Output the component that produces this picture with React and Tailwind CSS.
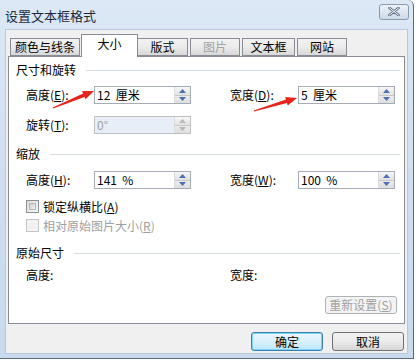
import React from 'react';

const font = "font-['SimSun','Noto_Sans_CJK_SC',sans-serif]";

function Spin({ disabled }) {
  const arrow = disabled ? '#b8b8b8' : '#4d6fb5';
  return (
    <div className="flex flex-col w-[16px] h-full border-l border-[#dcdcdc]">
      <div className="flex-1 flex items-center justify-center bg-gradient-to-b from-[#f6f6f6] to-[#e2e2e2] border-b border-[#c8c8c8]">
        <svg width="7" height="4" viewBox="0 0 7 4"><path d="M0 4 L3.5 0 L7 4 Z" fill={arrow} /></svg>
      </div>
      <div className="flex-1 flex items-center justify-center bg-gradient-to-b from-[#ececec] to-[#dedede]">
        <svg width="7" height="4" viewBox="0 0 7 4"><path d="M0 0 L3.5 4 L7 0 Z" fill={arrow} /></svg>
      </div>
    </div>
  );
}

function Field({ value, disabled }) {
  return (
    <div
      className={`flex h-[18px] w-[97px] border ${
        disabled ? 'border-[#c0c0c0] bg-[#e7eef7]' : 'border-[#a5acb5] bg-white'
      }`}
    >
      <div className={`flex-1 flex items-center pl-[2px] text-[12px] leading-none whitespace-pre ${disabled ? 'text-[#a0a0a0]' : 'text-black'}`}>
        {value}
      </div>
      <Spin disabled={disabled} />
    </div>
  );
}

function Label({ text, k }) {
  return (
    <span className="w-[68px] text-[12px] leading-none text-black whitespace-nowrap">
      {text}
      {k && (
        <>
          (<u>{k}</u>):
        </>
      )}
    </span>
  );
}

function Section({ title }) {
  return (
    <div className="flex items-center h-[14px] pl-[7px] pr-[4px]">
      <span className="text-[12px] leading-none text-black whitespace-nowrap">{title}</span>
      <div className="flex-1 h-px bg-[#d5dfe5] ml-[10px]" />
    </div>
  );
}

function Check({ label, k, disabled }) {
  return (
    <div className="flex items-center h-[13px] pl-[17px] gap-[4px]">
      <div className={`w-[13px] h-[13px] border ${disabled ? 'border-[#c4c4c4] bg-[#f4f4f4]' : 'border-[#8f8f8f] bg-gradient-to-br from-[#dcdcdc] to-[#f8f8f8]'} p-[2px]`}>
        <div className={`w-full h-full ${disabled ? 'bg-[#f0f0f0]' : 'bg-gradient-to-br from-[#cfcfcf] to-[#f0f0f0] border border-[#b8b8b8]'}`} />
      </div>
      <span className={`text-[12px] leading-none ${disabled ? 'text-[#a0a0a0]' : 'text-black'}`}>
        {label}(<u>{k}</u>)
      </span>
    </div>
  );
}

const tabs = [
  { label: '颜色与线条', w: 70 },
  { label: '大小', w: 57, active: true },
  { label: '版式', w: 51 },
  { label: '图片', w: 50, disabled: true },
  { label: '文本框', w: 53 },
  { label: '网站', w: 50 },
];

function Arrow({ x1, y1, x2, y2 }) {
  const dx = x2 - x1;
  const dy = y2 - y1;
  const len = Math.hypot(dx, dy);
  const ux = dx / len;
  const uy = dy / len;
  const px = -uy;
  const py = ux;
  const hl = 11;
  const hw = 4.5;
  const bx = x2 - ux * hl;
  const by = y2 - uy * hl;
  const pts = [
    [x1 + px * 0.6, y1 + py * 0.6],
    [bx + px * 1.8, by + py * 1.8],
    [bx + px * hw, by + py * hw],
    [x2, y2],
    [bx - px * hw, by - py * hw],
    [bx - px * 1.8, by - py * 1.8],
    [x1 - px * 0.6, y1 - py * 0.6],
  ]
    .map((p) => p.join(','))
    .join(' ');
  return <polygon points={pts} fill="#e8231b" />;
}

export default function App() {
  return (
    <div className={`relative w-[416px] h-[360px] overflow-hidden bg-white ${font}`}>
      {/* Window frame */}
      <div className="flex flex-col w-[414px] h-[359px] bg-gradient-to-b from-[#dce8f6] via-[#cfdef0] to-[#c9daee] border-r border-b border-[#5e6a78] rounded-tr-[6px]">
        {/* Title bar */}
        <div className="flex items-center justify-between h-[29px] pl-[5px] pr-[4px]">
          <span className="text-[13px] leading-none text-[#1b2a3a] mt-[1px]">设置文本框格式</span>
          <div className="flex items-center justify-center w-[30px] h-[16px] -mt-[6px] rounded-[3px] border border-[#8a99ab] bg-gradient-to-b from-[#eef3f9] to-[#cdd9e7]">
            <svg width="12" height="9" viewBox="0 0 12 9">
              <path d="M1.5 1 L10.5 8 M10.5 1 L1.5 8" stroke="#5a6a80" strokeWidth="2.6" strokeLinecap="round" />
              <path d="M1.5 1 L10.5 8 M10.5 1 L1.5 8" stroke="#fff" strokeWidth="1" strokeLinecap="round" />
            </svg>
          </div>
        </div>

        {/* Client area */}
        <div className="flex-1 mx-[5px] mb-[4px] bg-[#f0f0f0] border border-[#b9c9db] flex flex-col">
          {/* Tabs */}
          <div className="flex items-end h-[24px] pl-[4px] mt-[2px]">
            {tabs.map((t) => (
              <div
                key={t.label}
                style={{ width: t.w }}
                className={`flex items-center justify-center text-[12px] leading-none border border-[#898c95] ${
                  t.active
                    ? 'h-[23px] bg-white border-b-0 -mb-px z-10 mx-[-1px] pb-[4px]'
                    : 'h-[18px] mr-[2px] bg-gradient-to-b from-[#f2f2f2] via-[#ebebeb] to-[#d8d8d8]'
                } ${t.disabled ? 'text-[#a3a3a3]' : 'text-black'}`}
              >
                {t.label}
              </div>
            ))}
          </div>

          {/* Panel */}
          <div className="mx-[2px] h-[268px] bg-white border border-[#898c95] flex flex-col pt-[6px]">
            <Section title="尺寸和旋转" />
            <div className="flex items-center mt-[9px] pl-[17px]">
              <Label text="高度" k="E" />
              <Field value="12  厘米" />
              <div className="w-[39px]" />
              <Label text="宽度" k="D" />
              <Field value="5  厘米" />
            </div>
            <div className="flex items-center mt-[12px] pl-[17px]">
              <Label text="旋转" k="T" />
              <Field value="0°" disabled />
            </div>

            <div className="mt-[13px]">
              <Section title="缩放" />
            </div>
            <div className="flex items-center mt-[10px] pl-[17px]">
              <Label text="高度" k="H" />
              <Field value="141  %" />
              <div className="w-[39px]" />
              <Label text="宽度" k="W" />
              <Field value="100  %" />
            </div>
            <div className="mt-[11px]">
              <Check label="锁定纵横比" k="A" />
            </div>
            <div className="mt-[6px]">
              <Check label="相对原始图片大小" k="R" disabled />
            </div>

            <div className="mt-[14px]">
              <Section title="原始尺寸" />
            </div>
            <div className="flex items-center h-[14px] mt-[8px] pl-[17px]">
              <span className="w-[204px] text-[12px] leading-none">高度:</span>
              <span className="text-[12px] leading-none">宽度:</span>
            </div>
            <div className="flex justify-end mt-[14px] pr-[7px]">
              <div className="flex items-center justify-center w-[72px] h-[18px] rounded-[3px] border border-[#adb2b5] bg-[#f4f4f4] text-[12px] leading-none text-[#a0a0a0]">
                重新设置(<u>S</u>)
              </div>
            </div>
          </div>

          {/* Buttons */}
          <div className="flex justify-end gap-[9px] mt-[8px] pr-[3px]">
            <div className="flex items-center justify-center w-[72px] h-[19px] rounded-[3px] border border-[#3c7fb1] bg-gradient-to-b from-[#eaf6fd] via-[#d9f0fc] to-[#bee6fd] shadow-[inset_0_0_0_1px_#7ad3f8] text-[12px] leading-none">
              确定
            </div>
            <div className="flex items-center justify-center w-[72px] h-[19px] rounded-[3px] border border-[#707070] bg-gradient-to-b from-[#f2f2f2] via-[#ebebeb] to-[#d5d5d5] text-[12px] leading-none">
              取消
            </div>
          </div>
        </div>
      </div>

      {/* Red annotation arrows */}
      <svg className="absolute inset-0 pointer-events-none" width="416" height="360">
        <Arrow x1={53} y1={108} x2={94} y2={91} />
        <Arrow x1={254} y1={111} x2={297} y2={98} />
      </svg>
    </div>
  );
}
